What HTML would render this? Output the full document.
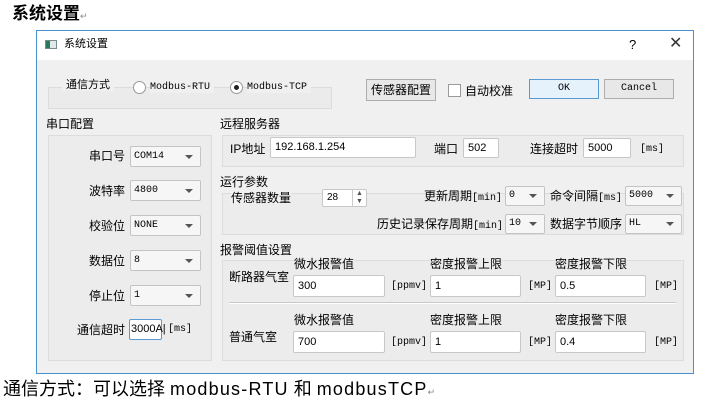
<!DOCTYPE html>
<html><head><meta charset="utf-8"><style>
*{margin:0;padding:0;box-sizing:border-box}
body{width:701px;height:417px;background:#fff;position:relative;overflow:hidden;font-family:"Liberation Sans","Noto Sans CJK SC",sans-serif;font-size:12px;color:#000}
.a{position:absolute;white-space:nowrap;line-height:1}
.m{font-family:"Liberation Mono","Noto Sans CJK SC",monospace;font-size:10px}
.dlg{position:absolute;left:36px;top:30px;width:658px;height:344px;border:1px solid #4a8fd0;background:#f0f0f0}
.tb{position:absolute;left:37px;top:31px;width:656px;height:29px;background:#fff}
.box{position:absolute;border:1px solid #dcdcdc;background:#ececec}
.in{position:absolute;background:#fff;border:1px solid #c8c8c8;border-radius:2px;font-size:11px;padding-left:4px;line-height:18px}
.cb{position:absolute;background:#f6f6f6;border:1px solid #c4c4c4;border-radius:2px;font-size:10px;padding-left:3px;font-family:"Liberation Mono",monospace}
.cb:after{content:"";position:absolute;right:7px;top:50%;margin-top:-2px;border-left:4px solid transparent;border-right:4px solid transparent;border-top:4px solid #555}
.btn{position:absolute;background:#e8e8e8;border:1px solid #adadad;text-align:center}
</style></head><body>
<div class="a" style="left:12px;top:5px;font-size:17px;font-weight:bold">系统设置<span style="font-size:9px;color:#888;font-weight:normal">↵</span></div>
<div class="dlg"></div><div class="tb"></div>
<div style="position:absolute;left:45px;top:40px;width:12px;height:9px;border:1px solid #7a8a90;background:#dfe8ea"><div style="width:4px;height:7px;background:#2a7a5a"></div></div>
<div class="a" style="left:64px;top:39px;font-size:11px">系统设置</div>
<div class="a" style="left:629px;top:38px;font-size:13px">?</div>
<div class="a" style="left:669px;top:36px;font-size:16px;color:#333">✕</div>

<div class="box" style="left:48px;top:87px;width:284px;height:22px;background:#ebebeb"></div>
<div class="a" style="left:62px;top:80px;background:#f0f0f0;padding:0 4px;font-size:11px">通信方式</div>
<div style="position:absolute;left:133px;top:81px;width:13px;height:13px;border:1px solid #999;border-radius:50%;background:#fff"></div>
<div class="a m" style="left:150px;top:83px;background:#f0f0f0;padding-right:4px">Modbus-RTU</div>
<div style="position:absolute;left:230px;top:81px;width:13px;height:13px;border:1px solid #999;border-radius:50%;background:#fff"><div style="position:absolute;left:3px;top:3px;width:5px;height:5px;border-radius:50%;background:#222"></div></div>
<div class="a m" style="left:247px;top:83px;background:#f0f0f0;padding-right:4px">Modbus-TCP</div>

<div class="btn" style="left:366px;top:79px;width:70px;height:22px;line-height:20px">传感器配置</div>
<div style="position:absolute;left:448px;top:84px;width:13px;height:13px;border:1px solid #999;background:#fff"></div>
<div class="a" style="left:465px;top:85px">自动校准</div>
<div class="btn m" style="left:529px;top:79px;width:70px;height:20px;line-height:18px;border-color:#5a9bd5;background:#e5f1fb">OK</div>
<div class="btn m" style="left:604px;top:79px;width:70px;height:20px;line-height:18px">Cancel</div>

<div class="a" style="left:46px;top:118px">串口配置</div>
<div class="box" style="left:48px;top:135px;width:164px;height:226px"></div>
<div class="a" style="left:89px;top:150px">串口号</div><div class="cb" style="left:130px;top:146px;width:71px;height:21px;line-height:19px">COM14</div>
<div class="a" style="left:89px;top:185px">波特率</div><div class="cb" style="left:130px;top:180px;width:71px;height:21px;line-height:19px">4800</div>
<div class="a" style="left:89px;top:220px">校验位</div><div class="cb" style="left:130px;top:215px;width:71px;height:21px;line-height:19px">NONE</div>
<div class="a" style="left:89px;top:255px">数据位</div><div class="cb" style="left:130px;top:250px;width:71px;height:21px;line-height:19px">8</div>
<div class="a" style="left:89px;top:290px">停止位</div><div class="cb" style="left:130px;top:285px;width:71px;height:21px;line-height:19px">1</div>
<div class="a" style="left:77px;top:324px">通信超时</div>
<div class="in" style="left:129px;top:319px;width:33px;height:21px;border-color:#5a9bd5;padding-left:1px;line-height:19px">3000A|</div>
<div class="a m" style="left:168px;top:325px">[ms]</div>

<div class="a" style="left:220px;top:118px">远程服务器</div>
<div class="box" style="left:222px;top:135px;width:462px;height:32px"></div>
<div class="a" style="left:230px;top:143px">IP地址</div>
<div class="in" style="left:270px;top:137px;width:146px;height:21px">192.168.1.254</div>
<div class="a" style="left:434px;top:143px">端口</div>
<div class="in" style="left:463px;top:138px;width:36px;height:20px">502</div>
<div class="a" style="left:530px;top:143px">连接超时</div>
<div class="in" style="left:583px;top:138px;width:48px;height:20px">5000</div>
<div class="a m" style="left:640px;top:145px">[ms]</div>

<div class="a" style="left:220px;top:176px">运行参数</div>
<div class="box" style="left:222px;top:193px;width:462px;height:42px"></div>
<div class="a" style="left:231px;top:192px;background:#f0f0f0">传感器数量</div>
<div class="in" style="left:322px;top:189px;width:45px;height:18px;line-height:16px;font-size:10px">28</div>
<div style="position:absolute;left:352px;top:190px;width:14px;height:16px;border-left:1px solid #ccc;font-size:7px;line-height:8px;text-align:center;color:#555">▲<br>▼</div>
<div class="a" style="left:424px;top:190px">更新周期<span class="m">[min]</span></div>
<div class="cb" style="left:505px;top:186px;width:40px;height:20px;line-height:18px">0</div>
<div class="a" style="left:550px;top:190px">命令间隔<span class="m">[ms]</span></div>
<div class="cb" style="left:625px;top:186px;width:57px;height:20px;line-height:18px">5000</div>
<div class="a" style="left:377px;top:218px">历史记录保存周期<span class="m">[min]</span></div>
<div class="cb" style="left:505px;top:214px;width:40px;height:20px;line-height:18px">10</div>
<div class="a" style="left:550px;top:218px">数据字节顺序</div>
<div class="cb" style="left:625px;top:214px;width:57px;height:20px;line-height:18px">HL</div>

<div class="a" style="left:220px;top:244px">报警阈值设置</div>
<div class="box" style="left:222px;top:260px;width:462px;height:101px"></div>
<div class="a" style="left:229px;top:271px">断路器气室</div>
<div class="a" style="left:294px;top:258px;background:#ececec">微水报警值</div>
<div class="a" style="left:430px;top:258px;background:#ececec">密度报警上限</div>
<div class="a" style="left:555px;top:258px;background:#ececec">密度报警下限</div>
<div class="in" style="left:293px;top:275px;width:92px;height:22px;line-height:20px">300</div>
<div class="a m" style="left:391px;top:282px">[ppmv]</div>
<div class="in" style="left:430px;top:275px;width:91px;height:22px;line-height:20px">1</div>
<div class="a m" style="left:528px;top:282px">[MP]</div>
<div class="in" style="left:555px;top:275px;width:91px;height:22px;line-height:20px">0.5</div>
<div class="a m" style="left:654px;top:282px">[MP]</div>
<div style="position:absolute;left:229px;top:302px;width:447px;height:2px;border-top:1px solid #c8c8c8;border-bottom:1px solid #fff"></div>
<div class="a" style="left:229px;top:331px">普通气室</div>
<div class="a" style="left:294px;top:314px">微水报警值</div>
<div class="a" style="left:430px;top:314px">密度报警上限</div>
<div class="a" style="left:555px;top:314px">密度报警下限</div>
<div class="in" style="left:293px;top:331px;width:92px;height:22px;line-height:20px">700</div>
<div class="a m" style="left:391px;top:338px">[ppmv]</div>
<div class="in" style="left:430px;top:331px;width:91px;height:22px;line-height:20px">1</div>
<div class="a m" style="left:528px;top:338px">[MP]</div>
<div class="in" style="left:555px;top:331px;width:91px;height:22px;line-height:20px">0.4</div>
<div class="a m" style="left:654px;top:338px">[MP]</div>

<div class="a" style="left:3px;top:380px;font-size:18px">通信方式：可以选择 <span style="letter-spacing:1.2px">modbus-RTU</span> 和 <span style="letter-spacing:1.2px">modbusTCP</span><span style="font-size:9px;color:#888">↵</span></div>
</body></html>
